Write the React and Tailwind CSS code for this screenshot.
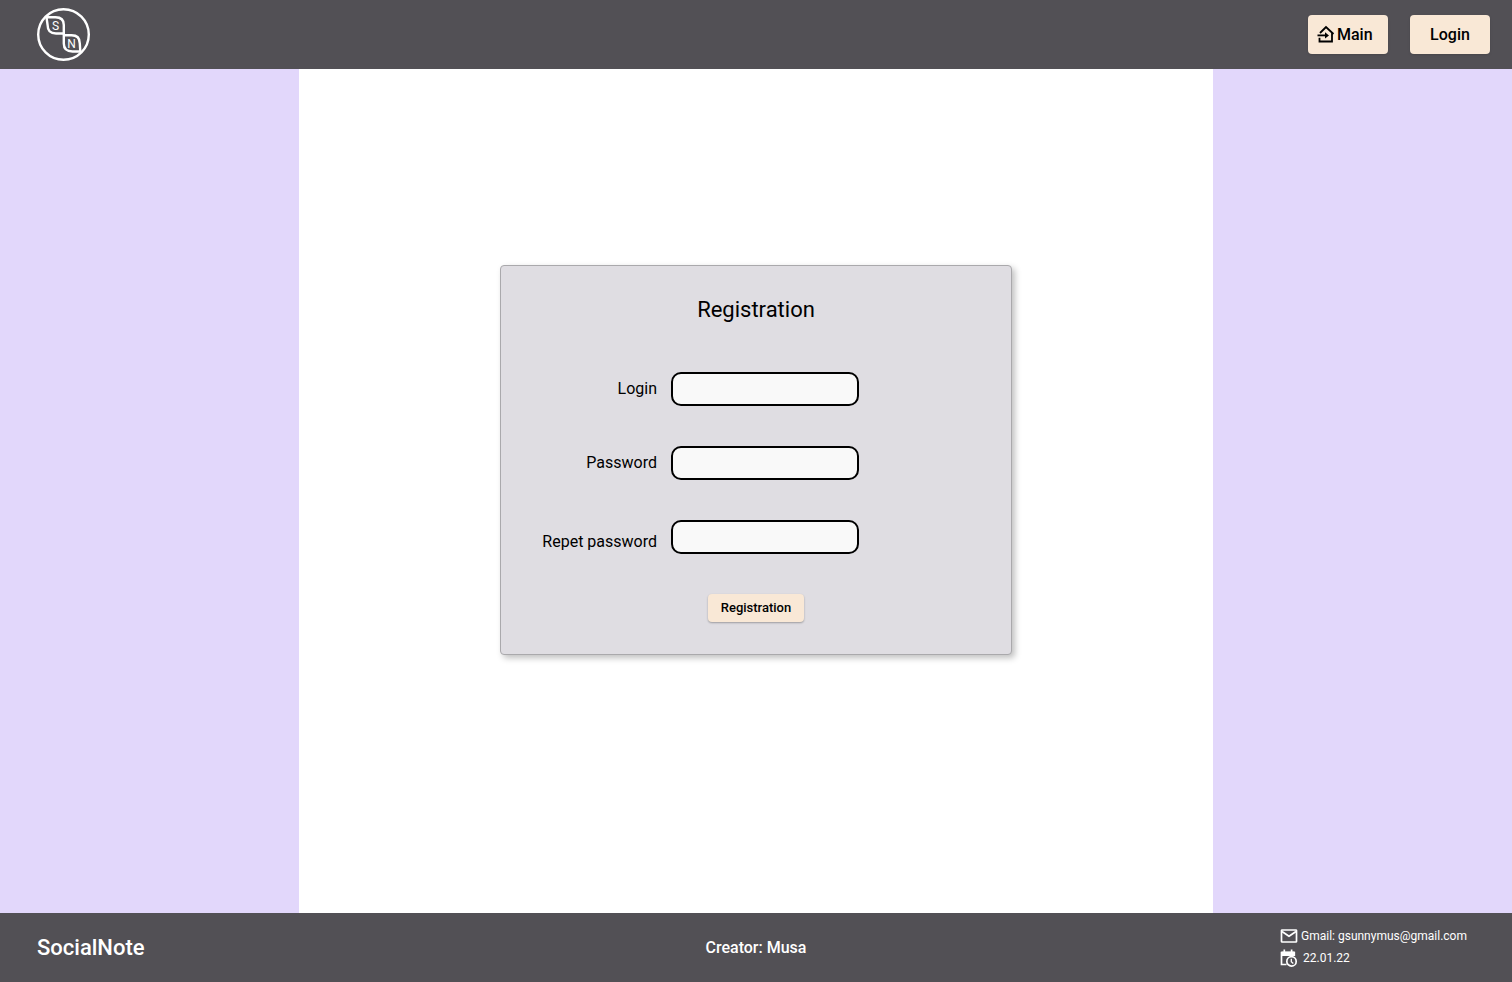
const fields = [
  { id: "login", label: "Login", type: "text", align: "items-center" },
  { id: "password", label: "Password", type: "password", align: "items-center" },
  { id: "repeat", label: "Repet password", type: "password", align: "items-end" },
];

function Logo() {
  return (
    <svg viewBox="0 0 54 54" className="size-[54px]" fill="none" stroke="#fff" strokeWidth="2.4" aria-label="SocialNote logo">
      <circle cx="26.5" cy="26.5" r="25.3" />
      <path d="M9.500 9.300H18.500C24 9.300 26.800 12 26.800 17V25.500H19C13 25.500 10.600 22.500 10.600 17Z" />
      <path d="M26.800 27.300H34.500C40.500 27.300 42.800 30 42.800 35.500L43.300 43.500H35.500C30 43.500 26.800 40.500 26.800 35.500Z" />
      <g fill="#fff" stroke="none" fontFamily="Roboto, sans-serif" fontSize="12" fontWeight="400" textAnchor="middle">
        <text x="18.500" y="22">S</text>
        <text x="34.500" y="39.500">N</text>
      </g>
    </svg>
  );
}

function HomeInIcon() {
  return (
    <svg viewBox="0 0 18 18" className="mb-0.5 size-[18px] shrink-0" fill="none" stroke="currentColor" strokeWidth="1.8" aria-hidden="true">
      <path d="M3 8L9 2L16.500 9M15 7.500V16.500H2.500V12.800" />
      <path d="M0.500 10.400H9.500" />
      <path d="M8 7.200L12 10.400L8 13.600Z" fill="currentColor" stroke="none" />
    </svg>
  );
}

function MailIcon() {
  return (
    <svg viewBox="0 0 18 18" className="size-[18px]" fill="none" stroke="currentColor" strokeWidth="1.7" strokeLinejoin="round" aria-hidden="true">
      <rect x="1.500" y="3" width="15" height="12" rx="0.600" />
      <path d="M2 4.500L9 9.300L16 4.500" />
    </svg>
  );
}

function CalendarClockIcon() {
  return (
    <svg viewBox="0 0 18 18" className="size-[18px]" fill="none" stroke="currentColor" strokeWidth="1.7" aria-hidden="true">
      <path d="M6.500 15.500H1.500V3.500H14.300V7M4.300 0.500V4M11.600 0.500V4" />
      <path d="M1.500 2.500H14.500V7H1.500Z" fill="currentColor" stroke="none" />
      <circle cx="11.500" cy="12.400" r="4.700" />
      <path d="M11.300 9.800V12.800L13.300 14.500" strokeWidth="1.300" />
    </svg>
  );
}

export default function App() {
  return (
    <div className="flex min-h-screen flex-col bg-[#e2d7fb] font-['Roboto',sans-serif] text-black">
      <header className="flex h-[69px] items-center justify-between bg-[#525055] pr-[22px] pl-[37px]">
        <a href="#home"><Logo /></a>
        <nav className="flex gap-[22px] text-base font-medium">
          <button type="button" className="flex h-[39px] w-20 items-center gap-0.5 rounded bg-[#f9e8d6] pl-[9px] shadow-sm">
            <HomeInIcon />
            Main
          </button>
          <button type="button" className="h-[39px] w-20 rounded bg-[#f9e8d6] shadow-sm">Login</button>
        </nav>
      </header>

      <main className="mx-auto flex w-full max-w-[914px] grow flex-col items-center justify-center bg-white pb-[62px]">
        <form className="flex w-full max-w-[512px] flex-col rounded border border-[#aaa9ac] bg-[#dfdde2] pt-7 pb-8 shadow-[3px_3px_6px_rgba(0,0,0,0.25)]">
          <h1 className="text-center text-[22px] leading-8">Registration</h1>
          <div className="mt-[46px] flex flex-col gap-10">
            {fields.map((f) => (
              <div key={f.id} className={"flex gap-3.5 " + f.align}>
                <label htmlFor={f.id} className="w-[156px] text-right text-base leading-6">{f.label}</label>
                <input id={f.id} type={f.type} className="h-[34px] w-[188px] rounded-[10px] border-2 border-black bg-[#f9f9f9] px-2" />
              </div>
            ))}
          </div>
          <button type="button" className="mt-10 h-7 w-24 self-center rounded bg-[#f9e8d6] text-[13px] font-medium shadow-[0_1px_2px_rgba(0,0,0,0.3)]">
            Registration
          </button>
        </form>
      </main>

      <footer className="grid h-[69px] grid-cols-3 items-center bg-[#525055] px-[37px] text-white">
        <p className="text-[22px] font-medium">SocialNote</p>
        <p className="text-center text-base font-medium">Creator: Musa</p>
        <ul className="flex w-[195px] flex-col gap-1 justify-self-end pb-0.5 text-[12px] leading-[18px]">
          <li className="flex items-center gap-[3px]">
            <MailIcon />
            <span>Gmail: gsunnymus@gmail.com</span>
          </li>
          <li className="flex items-center gap-[5px]">
            <CalendarClockIcon />
            <span>22.01.22</span>
          </li>
        </ul>
      </footer>
    </div>
  );
}
